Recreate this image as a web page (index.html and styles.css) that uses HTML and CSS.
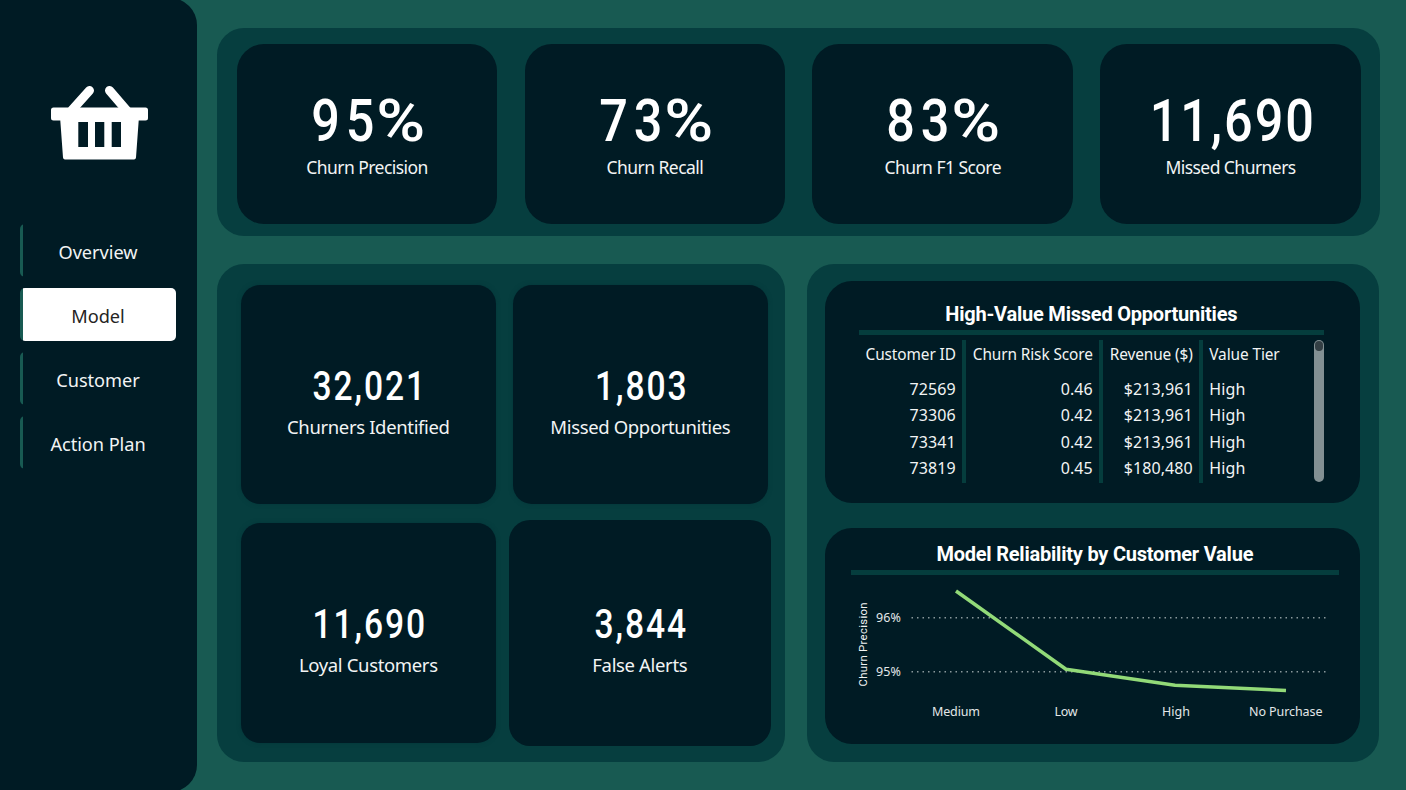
FILE: index.html
```html
<!DOCTYPE html>
<html lang="en">
<head>
<meta charset="utf-8">
<title>Churn Model</title>
<link rel="stylesheet" href="styles.css">
</head>
<body>
<div class="app">
  <aside class="sidebar">
    <svg class="logo" viewBox="0 0 98 75" width="98" height="75">
      <path d="M38.5 5.5 L21 25 M58.5 5.5 L77 27" stroke="#fff" stroke-width="9" stroke-linecap="round"/>
      <path fill="#fff" fill-rule="evenodd" d="M2.500 22.500H94.500Q97 22.500 97 25V33Q97 35.500 94.500 35.500H87.700L85 72.500Q84.800 74.500 83 74.500H14Q12.200 74.500 12 72.500L9.300 35.500H2.500Q0 35.500 0 33V25Q0 22.500 2.500 22.500ZM27.300 37V62H37V37ZM44 37V62H53.300V37ZM60.700 37V62H70V37Z"/>
    </svg>
    <nav class="nav">
      <a class="nav-item">Overview</a>
      <a class="nav-item active">Model</a>
      <a class="nav-item">Customer</a>
      <a class="nav-item">Action Plan</a>
    </nav>
  </aside>
  <main class="main">
    <section class="panel kpis">
      <div class="kpi percent"><div class="num">95<span class="pct">%</span></div><div class="label">Churn Precision</div></div>
      <div class="kpi percent"><div class="num">73<span class="pct">%</span></div><div class="label">Churn Recall</div></div>
      <div class="kpi percent"><div class="num">83<span class="pct">%</span></div><div class="label">Churn F1 Score</div></div>
      <div class="kpi"><div class="num">11,690</div><div class="label">Missed Churners</div></div>
    </section>
    <section class="panel tiles">
      <div class="tile"><div class="num">32,021</div><div class="label">Churners Identified</div></div>
      <div class="tile"><div class="num">1,803</div><div class="label">Missed Opportunities</div></div>
      <div class="tile"><div class="num">11,690</div><div class="label">Loyal Customers</div></div>
      <div class="tile large"><div class="num">3,844</div><div class="label">False Alerts</div></div>
    </section>
    <section class="panel details">
      <div class="card table-card">
        <h2 class="title">High-Value Missed Opportunities</h2>
        <div class="table">
          <div class="col c1"><b>Customer ID</b><span>72569</span><span>73306</span><span>73341</span><span>73819</span></div>
          <div class="col c2"><b>Churn Risk Score</b><span>0.46</span><span>0.42</span><span>0.42</span><span>0.45</span></div>
          <div class="col c3"><b>Revenue ($)</b><span>$213,961</span><span>$213,961</span><span>$213,961</span><span>$180,480</span></div>
          <div class="col c4"><b>Value Tier</b><span>High</span><span>High</span><span>High</span><span>High</span></div>
          <div class="scroll"><div class="thumb"></div></div>
        </div>
      </div>
      <div class="card chart-card">
        <h2 class="title">Model Reliability by Customer Value</h2>
        <svg class="chart" viewBox="851 575 489 150" width="489" height="150">
          <path class="grid-line" d="M911.500 617.800H1328M911.500 671.800H1328"/>
          <path class="series" d="M956 591L1066 669.300L1175 685.300L1286 690.500"/>
          <g class="axis">
            <text x="876" y="622" textLength="25">96%</text>
            <text x="876" y="676" textLength="25">95%</text>
            <text x="932" y="716" textLength="48">Medium</text>
            <text x="1054.500" y="716" textLength="23">Low</text>
            <text x="1162" y="716" textLength="28">High</text>
            <text x="1249" y="716" textLength="73.500">No Purchase</text>
          </g>
          <text class="axis-title" transform="translate(867.300 686.500) rotate(-90)" textLength="84">Churn Precision</text>
        </svg>
      </div>
    </section>
  </main>
</div>
</body>
</html>
```
FILE: styles.css
```css
* { box-sizing: border-box; }
body { margin: 0; background: #185a52; color: #fff; font-family: "Noto Sans", "Open Sans", sans-serif; }
.app { display: flex; width: 1406px; height: 790px; overflow: hidden; }
.sidebar { flex: none; width: 196.5px; height: 794px; margin-top: -2px; padding: 87px 20px 0; background: #001b24; border-radius: 0 27px 27px 0; }
.logo { display: block; margin-left: 31px; fill: none; }
.nav { display: flex; flex-direction: column; gap: 11px; margin-top: 64px; width: 156px; }
.nav-item { height: 53px; border-radius: 5px; padding-top: 2px; line-height: 53px; text-align: center; font-size: 18.2px; letter-spacing: -.05px; color: #f2f4f4; background: linear-gradient(90deg, #185a52 3px, transparent 3px); }
.nav-item.active { color: #252423; background: linear-gradient(90deg, #185a52 3px, #fff 3px); }
.main { display: grid; grid-template-columns: 568px 572px; grid-template-rows: 208px 498px; column-gap: 22px; row-gap: 28px; padding: 28px 0 0 20.3px; }
.panel { background: #063e3f; border-radius: 27px; }
.kpis { grid-column: 1 / 3; width: 1163px; padding: 16px 19px 12px 20px; display: flex; justify-content: space-between; }
.kpi { width: 260.5px; height: 180px; border-radius: 27px; background: #001b24; text-align: center; padding-top: 41.5px; }
.num { font-family: Roboto, sans-serif; font-weight: 500; white-space: nowrap; }
.kpi .num { font-size: 60px; line-height: 70px; letter-spacing: 2.3px; padding-left: 6px; transform: scaleX(.84); }
.percent .num { letter-spacing: 7px; padding-left: 7px; }
.pct { display: inline-block; letter-spacing: 0; margin-right: 14px; transform-origin: right center; transform: translateX(9px) scaleX(1.32); }
.label { white-space: nowrap; color: #f2f4f4; }
.kpi .label { font-size: 17.5px; line-height: 23px; letter-spacing: -.55px; }
.tiles { display: grid; grid-template-columns: 255px 255px; grid-template-rows: 219px 220px; gap: 19px 17px; padding: 21px 0 0 24px; }
.tile { border-radius: 19px; background: #001b24; box-shadow: 0 0 4px #00303580; text-align: center; padding-top: 77px; }
.tile.large { margin: -3px -3px -3px -4px; padding-top: 80px; border-radius: 21px; box-shadow: none; }
.tile .num { font-size: 40px; line-height: 50px; letter-spacing: 2.3px; padding-left: 3px; transform: scaleX(.84); }
.tile .label { font-size: 18.5px; line-height: 30px; letter-spacing: -.35px; }
.details { padding: 17px 18px 0; display: flex; flex-direction: column; gap: 25px; }
.card { width: 535px; border-radius: 27px; background: #001b24; }
.table-card { height: 222px; padding: 18px 36px 0 34px; }
.chart-card { height: 216px; padding: 11px 21px 0 26px; }
.title { margin: 0; height: 36px; border-bottom: 5px solid #053d3d; font: 700 20px/31px Roboto, sans-serif; letter-spacing: -.22px; text-align: center; white-space: nowrap; }
.table { display: flex; height: 143px; margin-top: 5px; }
.col { display: flex; flex-direction: column; text-align: right; font-size: 16px; line-height: 26.4px; color: #f2f4f4; white-space: nowrap; letter-spacing: .1px; }
.col b { font-weight: 400; font-size: 15.4px; line-height: 30px; height: 36px; letter-spacing: -.1px; }
.c1, .c2, .c3 { border-right: 4px solid #053d3d; padding-right: 6px; }
.c1 { width: 107px; }
.c2 { width: 137px; }
.c3 { width: 100px; }
.c4 { width: 111px; padding-left: 6.5px; text-align: left; }
.scroll { width: 10px; height: 142px; padding: 1px; border-radius: 5px; background: #829093; }
.thumb { height: 10px; border-radius: 4px; background: #333f44; }
.chart { display: block; }
.grid-line { stroke: #8a999c; stroke-width: 1.5; stroke-dasharray: 1.5 4; fill: none; }
.series { stroke: #92da78; stroke-width: 3.5; fill: none; stroke-linejoin: round; }
.axis { font-size: 12.5px; fill: #e3e7e8; }
.axis-title { font: 11.3px Roboto, sans-serif; fill: #f2f4f4; }
```
